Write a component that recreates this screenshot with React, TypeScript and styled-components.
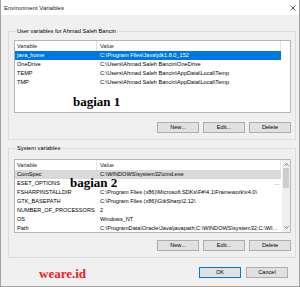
import React from "react";
import styled, { createGlobalStyle } from "styled-components";

const GlobalStyle = createGlobalStyle`
  html, body {
    margin: 0;
    padding: 0;
    background: #ffffff;
  }
  body {
    font-family: "Liberation Sans", Arial, sans-serif;
  }
`;

const Window = styled.div`
  width: 300px;
  height: 287px;
  box-sizing: border-box;
  border: 1px solid #a3a3a3;
  border-top: none;
  background: #f0f0f0;
  display: flex;
  flex-direction: column;
  overflow: hidden;
  font-size: 5.6px;
  color: #000;
`;

const TitleBar = styled.div`
  height: 15px;
  flex: none;
  background: #ffffff;
  display: flex;
  align-items: center;
  justify-content: space-between;
  padding: 0 3px 0 3px;
`;

const Title = styled.span`
  font-size: 6px;
  color: #1a1a1a;
  line-height: 8px;
`;

const Body = styled.div`
  display: flex;
  flex-direction: column;
  padding: 12px 3px 0 7px;
`;

const Group = styled.fieldset<{ $gap: number }>`
  margin: 0;
  padding: ${(p) => p.$gap}px 4px 6px 5px;
  border: 1px solid #dcdcdc;
  min-width: 0;
  & + & {
    margin-top: 4px;
  }
`;

const Legend = styled.legend`
  padding: 0 1px;
  margin-left: 2px;
  font-size: 5.7px;
  line-height: 8px;
  color: #000;
`;

const ListView = styled.div<{ $height: number }>`
  position: relative;
  height: ${(p) => p.$height}px;
  box-sizing: border-box;
  border: 1px solid #b5b5b5;
  background: #ffffff;
  display: flex;
  overflow: hidden;
`;

const Columns = styled.div`
  flex: 1;
  min-width: 0;
  display: flex;
  flex-direction: column;
`;

const HeaderRow = styled.div`
  display: flex;
  height: 10px;
  flex: none;
`;

const HeaderCell = styled.div<{ $width: number; $pad: number }>`
  width: ${(p) => p.$width}px;
  flex: none;
  box-sizing: border-box;
  padding-left: ${(p) => p.$pad}px;
  line-height: 10px;
  color: #1e1e1e;
  border-right: 1px solid #e5e5e5;
`;

const Row = styled.div<{ $state: "none" | "active" | "inactive" }>`
  display: flex;
  height: 9px;
  flex: none;
  width: 266px;
  background: ${(p) =>
    p.$state === "active" ? "#0078d7" : p.$state === "inactive" ? "#d9d9d9" : "transparent"};
  color: ${(p) => (p.$state === "active" ? "#ffffff" : "#000000")};
`;

const Cell = styled.div<{ $width: number; $pad: number }>`
  width: ${(p) => p.$width}px;
  flex: none;
  box-sizing: border-box;
  padding: 0 1px 0 ${(p) => p.$pad}px;
  line-height: 9px;
  white-space: pre;
  overflow: hidden;
  text-overflow: ellipsis;
`;

const ScrollBar = styled.div`
  width: 8px;
  flex: none;
  background: #f0f0f0;
  display: flex;
  flex-direction: column;
  align-items: center;
`;

const ScrollArrow = styled.div`
  height: 9px;
  display: flex;
  align-items: center;
  justify-content: center;
`;

const ScrollTrack = styled.div`
  flex: 1;
  width: 100%;
  display: flex;
  flex-direction: column;
  align-items: center;
`;

const ScrollThumb = styled.div`
  width: 6px;
  height: 20px;
  margin-top: -1px;
  background: #cdcdcd;
`;

const Watermark = styled.span<{ $left: number; $top: number }>`
  position: absolute;
  left: ${(p) => p.$left}px;
  top: ${(p) => p.$top}px;
  font-family: "Liberation Serif", "Times New Roman", serif;
  font-weight: bold;
  font-size: 13px;
  line-height: 13px;
  color: #000;
  white-space: nowrap;
`;

const ButtonRow = styled.div<{ $top: number }>`
  display: flex;
  justify-content: flex-end;
  gap: 4px;
  margin-top: ${(p) => p.$top}px;
`;

const Button = styled.button<{ $default?: boolean }>`
  width: 42px;
  height: 11px;
  padding: 0;
  box-sizing: border-box;
  border: 1px solid ${(p) => (p.$default ? "#0078d7" : "#adadad")};
  background: #e1e1e1;
  font-family: "Liberation Sans", Arial, sans-serif;
  font-size: 5.6px;
  line-height: 9px;
  color: #000;
`;

const Footer = styled.div`
  display: flex;
  justify-content: flex-end;
  gap: 5px;
  margin-top: 9px;
  padding-right: 8px;
  height: 13px;
`;

const Brand = styled.span`
  margin-right: auto;
  margin-left: 31px;
  font-family: "Liberation Serif", "Times New Roman", serif;
  font-weight: bold;
  font-size: 13px;
  line-height: 13px;
  color: #e8232a;
`;

type Entry = [string, string];

const userVars: Entry[] = [
  ["java_home", "C:\\Program Files\\Java\\jdk1.8.0_152"],
  ["OneDrive", "C:\\Users\\Ahmad Saleh Bancin\\OneDrive"],
  ["TEMP", "C:\\Users\\Ahmad Saleh Bancin\\AppData\\Local\\Temp"],
  ["TMP", "C:\\Users\\Ahmad Saleh Bancin\\AppData\\Local\\Temp"],
];

const systemVars: Entry[] = [
  ["ComSpec", "C:\\WINDOWS\\system32\\cmd.exe"],
  ["ESET_OPTIONS", " ".repeat(400) + "x"],
  ["FSHARPINSTALLDIR", "C:\\Program Files (x86)\\Microsoft SDKs\\F#\\4.1\\Framework\\v4.0\\"],
  ["GTK_BASEPATH", "C:\\Program Files (x86)\\GtkSharp\\2.12\\"],
  ["NUMBER_OF_PROCESSORS", "2"],
  ["OS", "Windows_NT"],
  ["Path", "C:\\ProgramData\\Oracle\\Java\\javapath;C:\\WINDOWS\\system32;C:\\WINDOWS;C:\\WINDOWS\\System32\\Wbem"],
];

const VAR_W = 82;
const VAL_W = 184;

function CloseIcon() {
  return (
    <svg width="6" height="6" viewBox="0 0 6 6">
      <path d="M0.5 0.5 L5.5 5.5 M5.5 0.5 L0.5 5.5" stroke="#3c3c3c" strokeWidth="0.8" fill="none" />
    </svg>
  );
}

function Chevron({ up }: { up?: boolean }) {
  return (
    <svg width="5" height="3" viewBox="0 0 5 3">
      <path d={up ? "M0.5 2.6 L2.5 0.6 L4.5 2.6" : "M0.5 0.4 L2.5 2.4 L4.5 0.4"} stroke="#606060" strokeWidth="0.9" fill="none" />
    </svg>
  );
}

function VarList(props: {
  rows: Entry[];
  height: number;
  selected: number;
  active: boolean;
  scroll?: boolean;
  children?: React.ReactNode;
}) {
  return (
    <ListView $height={props.height}>
      <Columns>
        <HeaderRow>
          <HeaderCell $width={VAR_W} $pad={2}>Variable</HeaderCell>
          <HeaderCell $width={VAL_W} $pad={3}>Value</HeaderCell>
        </HeaderRow>
        {props.rows.map(([name, value], i) => (
          <Row key={name} $state={i === props.selected ? (props.active ? "active" : "inactive") : "none"}>
            <Cell $width={VAR_W} $pad={2}>{name}</Cell>
            <Cell $width={VAL_W} $pad={3}>{value}</Cell>
          </Row>
        ))}
      </Columns>
      {props.scroll && (
        <ScrollBar>
          <ScrollArrow>
            <Chevron up />
          </ScrollArrow>
          <ScrollTrack>
            <ScrollThumb />
          </ScrollTrack>
          <ScrollArrow>
            <Chevron />
          </ScrollArrow>
        </ScrollBar>
      )}
      {props.children}
    </ListView>
  );
}

function Actions({ top }: { top: number }) {
  return (
    <ButtonRow $top={top}>
      <Button>New...</Button>
      <Button>Edit...</Button>
      <Button>Delete</Button>
    </ButtonRow>
  );
}

export default function App() {
  return (
    <>
      <GlobalStyle />
      <Window>
        <TitleBar>
          <Title>Environment Variables</Title>
          <CloseIcon />
        </TitleBar>
        <Body>
          <Group $gap={5}>
            <Legend>User variables for Ahmad Saleh Bancin</Legend>
            <VarList rows={userVars} height={73} selected={0} active>
              <Watermark $left={58} $top={54}>bagian 1</Watermark>
            </VarList>
            <Actions top={9} />
          </Group>
          <Group $gap={7}>
            <Legend>System variables</Legend>
            <VarList rows={systemVars} height={74} selected={0} active={false} scroll>
              <Watermark $left={55} $top={16}>bagian 2</Watermark>
            </VarList>
            <Actions top={7} />
          </Group>
          <Footer>
            <Brand>weare.id</Brand>
            <Button $default>OK</Button>
            <Button>Cancel</Button>
          </Footer>
        </Body>
      </Window>
    </>
  );
}
